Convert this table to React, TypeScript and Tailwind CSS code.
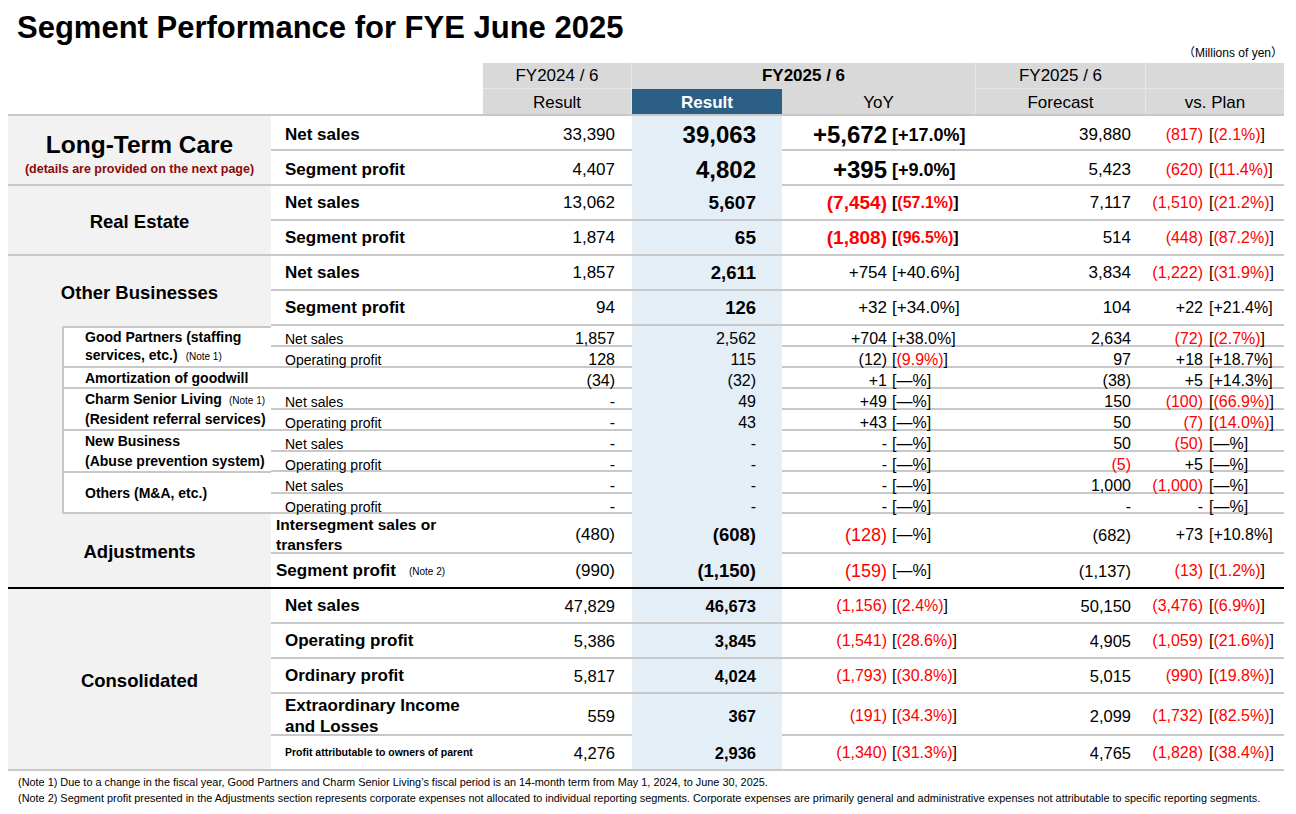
import React from "react";

type Style = { fy: string; res: string; yv: string; yp: string; fc: string; pv: string; pp: string };
type Data = [string, string, string, string, string, string, string];

const LINE = "border-[#c8c8c8]";

const LTC: Style = {
  fy: "text-[17px]",
  res: "text-[24px] font-bold",
  yv: "text-[24px] font-bold",
  yp: "text-[18px] font-bold",
  fc: "text-[17px]",
  pv: "text-[16px]",
  pp: "text-[16px]",
};
const RE: Style = {
  fy: "text-[17px]",
  res: "text-[19px] font-bold",
  yv: "text-[19px] font-bold",
  yp: "text-[16px] font-bold",
  fc: "text-[17px]",
  pv: "text-[16px]",
  pp: "text-[16px]",
};
const OB: Style = {
  fy: "text-[17px]",
  res: "text-[18.5px] font-bold",
  yv: "text-[17px]",
  yp: "text-[17px]",
  fc: "text-[17px]",
  pv: "text-[16px]",
  pp: "text-[16px]",
};
const SUB: Style = {
  fy: "text-[16px]",
  res: "text-[16px]",
  yv: "text-[16px]",
  yp: "text-[16px]",
  fc: "text-[16px]",
  pv: "text-[16px]",
  pp: "text-[16px]",
};
const ADJ: Style = {
  fy: "text-[17px]",
  res: "text-[18.5px] font-bold",
  yv: "text-[18px]",
  yp: "text-[16px]",
  fc: "text-[16.5px]",
  pv: "text-[16px]",
  pp: "text-[16px]",
};
const CONS: Style = {
  fy: "text-[16.5px]",
  res: "text-[16.5px] font-bold",
  yv: "text-[16px]",
  yp: "text-[16px]",
  fc: "text-[16.5px]",
  pv: "text-[16px]",
  pp: "text-[16px]",
};

// a leading "!" marks a figure printed in red
const Red = ({ s }: { s: string }) =>
  s.startsWith("!") ? <span className="text-[#ff0000]">{s.slice(1)}</span> : <>{s}</>;

interface RowProps {
  item?: React.ReactNode;
  itemCls?: string;
  d: Data;
  h: string;
  s: Style;
  b?: string;
}

const Row = ({ item, itemCls = "pl-[14px] text-[17px] font-bold", d, h, s, b = `border-b-2 ${LINE}` }: RowProps) => {
  const [fy, res, yv, yp, fc, pv, pp] = d;
  return (
    <div className={`grid grid-cols-[212px_149px_150px_194px_170px_138px] ${h} ${b}`}>
      <div className={`flex items-center pt-[1px] ${itemCls}`}>{item}</div>
      <div className={`flex items-center justify-end pr-[17px] pt-[1px] ${s.fy}`}>{fy}</div>
      <div className={`flex items-center justify-end pr-[26px] pt-[1px] bg-[#e4eef6] ${s.res}`}>{res}</div>
      <div className="flex items-center pt-[1px] whitespace-nowrap">
        <span className={`w-[105px] text-right ${s.yv}`}>
          <Red s={yv} />
        </span>
        <span className={`ml-[5px] ${s.yp}`}>
          [<Red s={yp} />]
        </span>
      </div>
      <div className={`flex items-center justify-end pr-[15px] pt-[1px] ${s.fc}`}>
        <Red s={fc} />
      </div>
      <div className="flex items-center pt-[1px] whitespace-nowrap">
        <span className={`w-[57px] text-right ${s.pv}`}>
          <Red s={pv} />
        </span>
        <span className={`ml-[6px] ${s.pp}`}>
          [<Red s={pp} />]
        </span>
      </div>
    </div>
  );
};

const SegLabel = ({ children, cls = `border-b-2 ${LINE}` }: { children: React.ReactNode; cls?: string }) => (
  <div className={`w-[263px] bg-[#f2f2f2] flex flex-col items-center justify-center pt-[3px] font-bold ${cls}`}>
    {children}
  </div>
);

const Note = ({ n, cls = "ml-[8px]" }: { n: number; cls?: string }) => (
  <span className={`text-[10px] font-normal ${cls}`}>(Note {n})</span>
);

const SubLabel = ({ children, top }: { children: React.ReactNode; top?: boolean }) => (
  <div
    className={`w-[207px] pl-[21px] flex flex-col justify-center text-[14px] font-bold leading-[18px] border-b-2 ${LINE} ${
      top ? `border-t-2` : ""
    }`}
  >
    {children}
  </div>
);

const subItem = "pl-[14px] text-[14px]";

export default function App() {
  return (
    <div className="w-[1296px] h-[814px] overflow-hidden bg-white pl-2 pr-3 text-black font-['Liberation_Sans',Arial,sans-serif]">
      <h1 className="h-[46px] pt-[10px] pl-[9px] text-[31px] leading-[36px] font-bold">
        Segment Performance for FYE June 2025
      </h1>
      <div className="h-[17px] pr-[1px] text-right text-[12px] leading-[14px] font-['Liberation_Sans','Noto_Sans_CJK_JP',sans-serif]">
        （Millions of yen）
      </div>

      {/* column headings */}
      <div className={`flex border-b-2 ${LINE}`}>
        <div className="w-[475px]" />
        <div className="flex flex-col text-[17px]">
          <div className="flex h-[26px] bg-[#d9d9d9]">
            <div className="w-[149px] flex items-center justify-center border-r border-b border-[#e6e6e6]">FY2024 / 6</div>
            <div className="w-[344px] flex items-center justify-center font-bold border-r border-[#e6e6e6]">FY2025 / 6</div>
            <div className="w-[170px] flex items-center justify-center border-r border-b border-[#e6e6e6]">FY2025 / 6</div>
            <div className="w-[138px] border-b border-[#e6e6e6]" />
          </div>
          <div className="flex h-[25px] bg-[#d9d9d9]">
            <div className="w-[149px] flex items-center justify-center pt-[2px] border-r border-[#e6e6e6]">Result</div>
            <div className="w-[150px] flex items-center justify-center pt-[2px] bg-[#2b5f86] text-white font-bold">Result</div>
            <div className="w-[194px] flex items-center justify-center pt-[2px] border-r border-[#e6e6e6]">YoY</div>
            <div className="w-[170px] flex items-center justify-center pt-[2px] border-r border-[#e6e6e6]">Forecast</div>
            <div className="w-[138px] flex items-center justify-center pt-[2px]">vs. Plan</div>
          </div>
        </div>
      </div>

      {/* Long-Term Care */}
      <div className="flex">
        <SegLabel cls={`border-b-2 ${LINE} pt-[8px]`}>
          <span className="text-[24.5px] leading-[30px]">Long-Term Care</span>
          <span className="text-[12.5px] leading-[18px] text-[#8b0a0a]">(details are provided on the next page)</span>
        </SegLabel>
        <div>
          <Row item="Net sales" h="h-[35px]" s={LTC} d={["33,390", "39,063", "+5,672", "+17.0%", "39,880", "!(817)", "!(2.1%)"]} />
          <Row item="Segment profit" h="h-[35px]" s={LTC} d={["4,407", "4,802", "+395", "+9.0%", "5,423", "!(620)", "!(11.4%)"]} />
        </div>
      </div>

      {/* Real Estate */}
      <div className="flex">
        <SegLabel>
          <span className="text-[18.5px]">Real Estate</span>
        </SegLabel>
        <div>
          <Row item="Net sales" h="h-[35px]" s={RE} d={["13,062", "5,607", "!(7,454)", "!(57.1%)", "7,117", "!(1,510)", "!(21.2%)"]} />
          <Row item="Segment profit" h="h-[35px]" s={RE} d={["1,874", "65", "!(1,808)", "!(96.5%)", "514", "!(448)", "!(87.2%)"]} />
        </div>
      </div>

      {/* Other Businesses */}
      <div>
        <div className="flex">
          <SegLabel cls="">
            <span className="text-[18.5px]">Other Businesses</span>
          </SegLabel>
          <div>
            <Row item="Net sales" h="h-[35px]" s={OB} d={["1,857", "2,611", "+754", "+40.6%", "3,834", "!(1,222)", "!(31.9%)"]} />
            <Row item="Segment profit" h="h-[35px]" s={OB} d={["94", "126", "+32", "+34.0%", "104", "+22", "+21.4%"]} />
          </div>
        </div>
        <div className="flex">
          <div className="w-[54px] bg-[#f2f2f2]" />
          <div className={`border-l-2 ${LINE}`}>
            <div className="flex">
              <SubLabel top>
                <span>Good Partners (staffing</span>
                <span>
                  services, etc.)
                  <Note n={1} />
                </span>
              </SubLabel>
              <div>
                <Row item="Net sales" itemCls={subItem} h="h-[21px]" s={SUB} d={["1,857", "2,562", "+704", "+38.0%", "2,634", "!(72)", "!(2.7%)"]} />
                <Row item="Operating profit" itemCls={subItem} h="h-[21px]" s={SUB} d={["128", "115", "(12)", "!(9.9%)", "97", "+18", "+18.7%"]} />
              </div>
            </div>
            <div className="flex">
              <SubLabel>
                <span>Amortization of goodwill</span>
              </SubLabel>
              <div>
                <Row itemCls={subItem} h="h-[21px]" s={SUB} d={["(34)", "(32)", "+1", "—%", "(38)", "+5", "+14.3%"]} />
              </div>
            </div>
            <div className="flex">
              <SubLabel>
                <span>
                  Charm Senior Living
                  <Note n={1} cls="ml-[7px]" />
                </span>
                <span>(Resident referral services)</span>
              </SubLabel>
              <div>
                <Row item="Net sales" itemCls={subItem} h="h-[21px]" s={SUB} d={["-", "49", "+49", "—%", "150", "!(100)", "!(66.9%)"]} />
                <Row item="Operating profit" itemCls={subItem} h="h-[21px]" s={SUB} d={["-", "43", "+43", "—%", "50", "!(7)", "!(14.0%)"]} />
              </div>
            </div>
            <div className="flex">
              <SubLabel>
                <span className="leading-[20px]">New Business</span>
                <span className="leading-[20px]">(Abuse prevention system)</span>
              </SubLabel>
              <div>
                <Row item="Net sales" itemCls={subItem} h="h-[21px]" s={SUB} d={["-", "-", "-", "—%", "50", "!(50)", "—%"]} />
                <Row item="Operating profit" itemCls={subItem} h="h-[20px]" s={SUB} d={["-", "-", "-", "—%", "!(5)", "+5", "—%"]} />
              </div>
            </div>
            <div className="flex">
              <SubLabel>
                <span>Others (M&amp;A, etc.)</span>
              </SubLabel>
              <div>
                <Row item="Net sales" itemCls={subItem} h="h-[21px]" s={SUB} d={["-", "-", "-", "—%", "1,000", "!(1,000)", "—%"]} />
                <Row item="Operating profit" itemCls={subItem} h="h-[20px]" s={SUB} d={["-", "-", "-", "—%", "-", "-", "—%"]} />
              </div>
            </div>
          </div>
        </div>
      </div>

      {/* Adjustments */}
      <div className="flex">
        <SegLabel cls="border-b-2 border-black">
          <span className="text-[18.5px]">Adjustments</span>
        </SegLabel>
        <div>
          <Row
            item={
              <span className="leading-[20px]">
                Intersegment sales or
                <br />
                transfers
              </span>
            }
            itemCls="pl-[5px] text-[15.5px] font-bold"
            h="h-[40px]"
            s={ADJ}
            d={["(480)", "(608)", "!(128)", "—%", "(682)", "+73", "+10.8%"]}
          />
          <Row
            item={
              <>
                Segment profit
                <Note n={2} cls="ml-[13px]" />
              </>
            }
            itemCls="pl-[5px] text-[17px] font-bold"
            h="h-[35px]"
            b="border-b-2 border-black"
            s={ADJ}
            d={["(990)", "(1,150)", "!(159)", "—%", "(1,137)", "!(13)", "!(1.2%)"]}
          />
        </div>
      </div>

      {/* Consolidated */}
      <div className="flex">
        <SegLabel>
          <span className="text-[18.5px]">Consolidated</span>
        </SegLabel>
        <div>
          <Row item="Net sales" h="h-[35px]" s={CONS} d={["47,829", "46,673", "!(1,156)", "!(2.4%)", "50,150", "!(3,476)", "!(6.9%)"]} />
          <Row item="Operating profit" h="h-[35px]" s={CONS} d={["5,386", "3,845", "!(1,541)", "!(28.6%)", "4,905", "!(1,059)", "!(21.6%)"]} />
          <Row item="Ordinary profit" h="h-[35px]" s={CONS} d={["5,817", "4,024", "!(1,793)", "!(30.8%)", "5,015", "!(990)", "!(19.8%)"]} />
          <Row
            item={
              <span className="leading-[21px]">
                Extraordinary Income
                <br />
                and Losses
              </span>
            }
            h="h-[42px]"
            s={CONS}
            d={["559", "367", "!(191)", "!(34.3%)", "2,099", "!(1,732)", "!(82.5%)"]}
          />
          <Row
            item="Profit attributable to owners of parent"
            itemCls="pl-[14px] text-[10.5px] font-bold"
            h="h-[35px]"
            s={CONS}
            d={["4,276", "2,936", "!(1,340)", "!(31.3%)", "4,765", "!(1,828)", "!(38.4%)"]}
          />
        </div>
      </div>

      {/* footnotes */}
      <div className="pl-[10px] pt-[3px] text-[10.9px] leading-[16px]">
        <p>
          (Note 1) Due to a change in the fiscal year, Good Partners and Charm Senior Living’s fiscal period is an 14-month term from May 1, 2024, to June 30, 2025.
        </p>
        <p>
          (Note 2) Segment profit presented in the Adjustments section represents corporate expenses not allocated to individual reporting segments. Corporate expenses are primarily general and administrative expenses not attributable to specific reporting segments.
        </p>
      </div>
    </div>
  );
}
